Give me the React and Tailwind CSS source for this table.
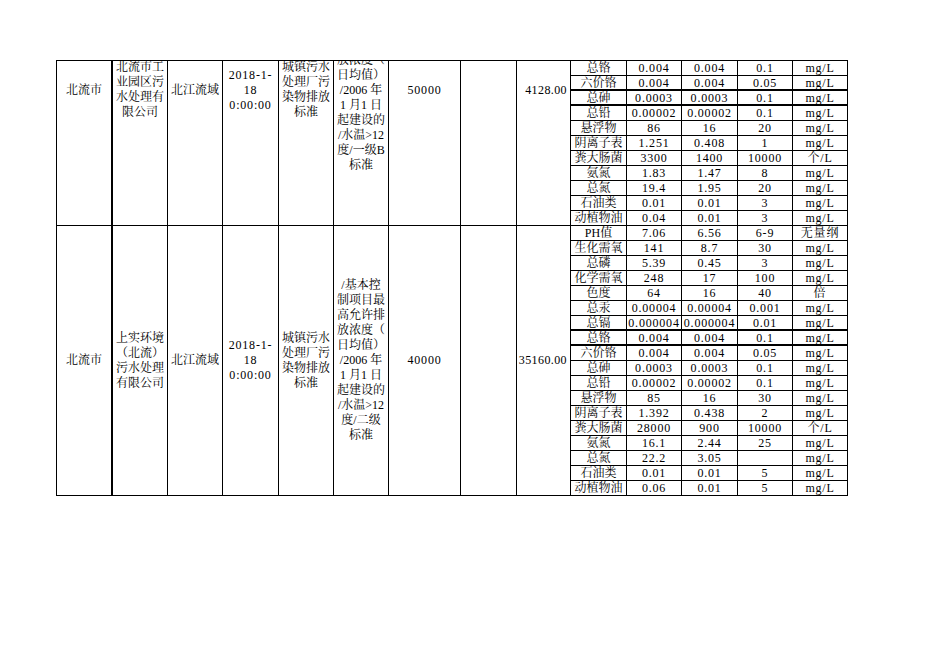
import React from "react";

const groups = [
  {
    height: "h-[165px]",
    inner: "h-[272px] -mt-[107px]",
    city: "北流市",
    company: ["北流市工", "业园区污", "水处理有", "限公司"],
    basin: "北江流域",
    date: ["2018-1-", "18", "0:00:00"],
    standard: ["城镇污水", "处理厂污", "染物排放", "标准"],
    detail: ["/基本控", "制项目最", "高允许排", "放浓度（", "日均值）", "/2006 年", "1 月1 日", "起建设的", "/水温>12", "度/一级B", "标准"],
    capacity: "50000",
    amount: "4128.00",
    thick: [1, 2],
    rows: [
      ["总铬", "0.004", "0.004", "0.1", "mg/L"],
      ["六价铬", "0.004", "0.004", "0.05", "mg/L"],
      ["总砷", "0.0003", "0.0003", "0.1", "mg/L"],
      ["总铅", "0.00002", "0.00002", "0.1", "mg/L"],
      ["悬浮物", "86", "16", "20", "mg/L"],
      ["阴离子表", "1.251", "0.408", "1", "mg/L"],
      ["粪大肠菌", "3300", "1400", "10000", "个/L"],
      ["氨氮", "1.83", "1.47", "8", "mg/L"],
      ["总氮", "19.4", "1.95", "20", "mg/L"],
      ["石油类", "0.01", "0.01", "3", "mg/L"],
      ["动植物油", "0.04", "0.01", "3", "mg/L"],
    ],
  },
  {
    height: "h-[270px]",
    inner: "h-full",
    city: "北流市",
    company: ["上实环境", "（北流）", "污水处理", "有限公司"],
    basin: "北江流域",
    date: ["2018-1-", "18", "0:00:00"],
    standard: ["城镇污水", "处理厂污", "染物排放", "标准"],
    detail: ["/基本控", "制项目最", "高允许排", "放浓度（", "日均值）", "/2006 年", "1 月1 日", "起建设的", "/水温>12", "度/二级", "标准"],
    capacity: "40000",
    amount: "35160.00",
    thick: [6, 7],
    rows: [
      ["PH值", "7.06", "6.56", "6-9", "无量纲"],
      ["生化需氧", "141", "8.7", "30", "mg/L"],
      ["总磷", "5.39", "0.45", "3", "mg/L"],
      ["化学需氧", "248", "17", "100", "mg/L"],
      ["色度", "64", "16", "40", "倍"],
      ["总汞", "0.00004", "0.00004", "0.001", "mg/L"],
      ["总镉", "0.000004", "0.000004", "0.01", "mg/L"],
      ["总铬", "0.004", "0.004", "0.1", "mg/L"],
      ["六价铬", "0.004", "0.004", "0.05", "mg/L"],
      ["总砷", "0.0003", "0.0003", "0.1", "mg/L"],
      ["总铅", "0.00002", "0.00002", "0.1", "mg/L"],
      ["悬浮物", "85", "16", "30", "mg/L"],
      ["阴离子表", "1.392", "0.438", "2", "mg/L"],
      ["粪大肠菌", "28000", "900", "10000", "个/L"],
      ["氨氮", "16.1", "2.44", "25", "mg/L"],
      ["总氮", "22.2", "3.05", "", "mg/L"],
      ["石油类", "0.01", "0.01", "5", "mg/L"],
      ["动植物油", "0.06", "0.01", "5", "mg/L"],
    ],
  },
];

const measureWidths = ["w-[56px]", "w-[55px]", "w-[56px]", "w-[55px]", "w-[55px]"];

// merged cell on the left, text centred over the whole merged block
function Block({ width, inner, align = "items-center text-center", children }) {
  return (
    <div className={`${width} h-full shrink-0 overflow-hidden border-b border-black`}>
      <div className={`${inner} flex flex-col justify-center leading-[15px] ${align}`}>{children}</div>
    </div>
  );
}

function Lines({ lines }) {
  return lines.map((l, i) => (
    <div key={i} className="whitespace-pre">
      {l}
    </div>
  ));
}

function Group({ g }) {
  return (
    <div className={`flex ${g.height}`}>
      <Block width="w-[56px] border-r-2 border-r-black" inner={g.inner}>
        {g.city}
      </Block>
      <Block width="w-[55px] border-r border-r-black" inner={g.inner}>
        <Lines lines={g.company} />
      </Block>
      <Block width="w-[55px] border-r border-r-black" inner={g.inner}>
        {g.basin}
      </Block>
      <Block width="w-[56px] border-r border-r-black" inner={g.inner} align="items-center text-center tracking-[0.8px]">
        <Lines lines={g.date} />
      </Block>
      <Block width="w-[55px] border-r border-r-black" inner={g.inner}>
        <Lines lines={g.standard} />
      </Block>
      <Block width="w-[55px] border-r border-r-black" inner={g.inner}>
        <Lines lines={g.detail} />
      </Block>
      <Block width="w-[72px] border-r border-r-black" inner={g.inner} align="items-center text-center tracking-[0.8px]">
        {g.capacity}
      </Block>
      <Block width="w-[56px] border-r border-r-black" inner={g.inner} />
      <Block width="w-[54px] border-r border-r-black" inner={g.inner} align="items-end pr-[3px] tracking-[0.4px] whitespace-nowrap">
        {g.amount}
      </Block>
      <div className="flex flex-col">
        {g.rows.map((r, i) => (
          <div
            key={i}
            className={`flex h-[15px] border-black ${g.thick.includes(i) ? "border-b-2" : "border-b"}`}
          >
            {r.map((c, j) => (
              <div
                key={j}
                className={`${measureWidths[j]} flex items-center justify-center whitespace-nowrap border-r border-black leading-[14px] ${
                  j > 0 ? "tracking-[0.8px]" : ""
                }`}
              >
                {c}
              </div>
            ))}
          </div>
        ))}
      </div>
    </div>
  );
}

export default function App() {
  return (
    <div className="min-h-screen bg-white pl-[56px] pt-[60px] font-['Liberation_Serif','Noto_Serif_CJK_SC','Noto_Sans_CJK_SC',serif] text-[12px] text-black">
      <div className="inline-flex flex-col border-l border-t border-black">
        {groups.map((g, i) => (
          <Group key={i} g={g} />
        ))}
      </div>
    </div>
  );
}
